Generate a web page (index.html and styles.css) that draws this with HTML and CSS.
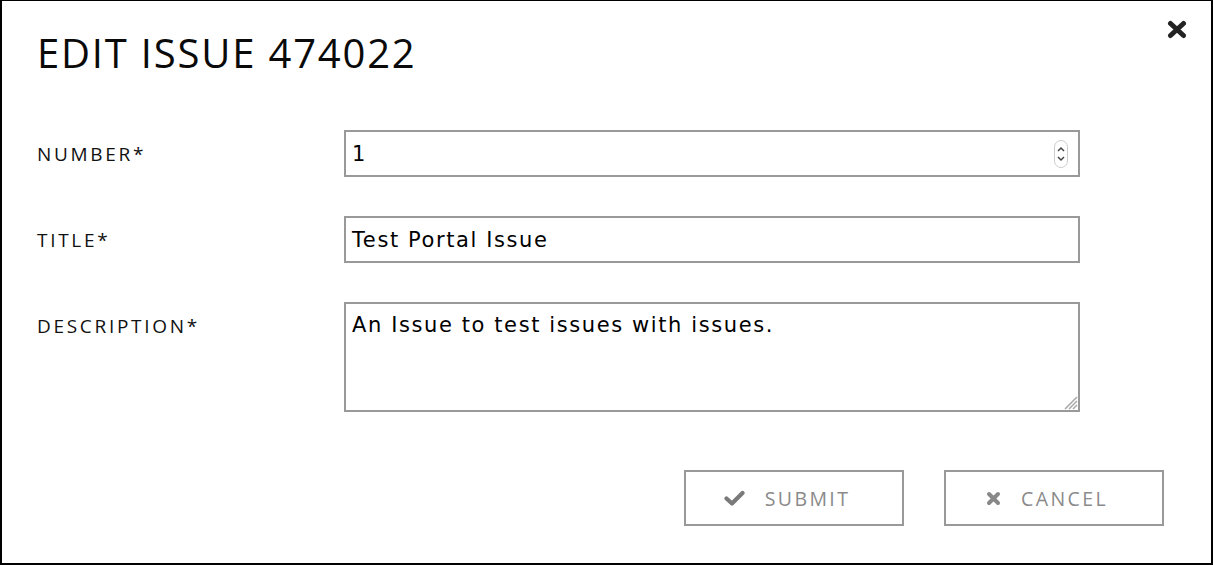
FILE: index.html
```html
<!DOCTYPE html>
<html>
<head>
<meta charset="utf-8">
<link rel="stylesheet" href="styles.css">
</head>
<body>
<div class="modal">
  <button class="close" aria-label="Close">
    <svg width="20" height="19" viewBox="0 0 20 19"><path d="M3.5 3.5 L16.5 15.5 M16.5 3.5 L3.5 15.5" stroke="#222" stroke-width="5" stroke-linecap="round"/></svg>
  </button>
  <h1 class="title">EDIT ISSUE 474022</h1>
  <form class="form">
    <label class="label">NUMBER*</label>
    <div class="field number-field">
      <span class="value">1</span>
      <span class="spinner">
        <svg width="14" height="28" viewBox="0 0 14 28"><rect x="0.5" y="0.5" width="13" height="27" rx="6.5" fill="#fff" stroke="#ccc"/><path d="M4 11 L7 8 L10 11" fill="none" stroke="#444" stroke-width="1.5"/><path d="M4 17 L7 20 L10 17" fill="none" stroke="#444" stroke-width="1.5"/></svg>
      </span>
    </div>
    <label class="label">TITLE*</label>
    <div class="field"><span class="value">Test Portal Issue</span></div>
    <label class="label">DESCRIPTION*</label>
    <div class="field textarea">
      <span class="value">An Issue to test issues with issues.</span>
      <svg class="grip" width="18" height="18" viewBox="0 0 18 18"><path d="M17 5 L5 17 M17 9 L9 17 M17 13 L13 17" stroke="#aaa" stroke-width="1.6"/></svg>
    </div>
  </form>
  <div class="actions">
    <button class="btn" type="button">
      <svg class="icon" width="21" height="16" viewBox="0 0 21 16"><path d="M2.5 8.5 L8 13.5 L18.5 3" fill="none" stroke="#7a7a7a" stroke-width="4.2" stroke-linejoin="round" stroke-linecap="round"/></svg>
      <span>SUBMIT</span>
    </button>
    <button class="btn" type="button">
      <svg class="icon" width="15" height="15" viewBox="0 0 15 15"><path d="M3 3 L12 12 M12 3 L3 12" stroke="#888" stroke-width="4" stroke-linecap="round"/></svg>
      <span>CANCEL</span>
    </button>
  </div>
</div>
</body>
</html>
```

FILE: styles.css
```css
html, body {
  margin: 0;
  padding: 0;
  background: #fff;
}
.modal {
  position: relative;
  box-sizing: border-box;
  width: 1213px;
  height: 565px;
  border-top: 1px solid #000;
  border-left: 2px solid #000;
  border-right: 2px solid #000;
  border-bottom: 2px solid #000;
  padding: 0 0 0 35px;
  font-family: "Open Sans", "Noto Sans", sans-serif;
  color: #000;
}
.close {
  position: absolute;
  top: 19px;
  right: 24px;
  border: 0;
  background: none;
  padding: 0;
  width: 20px;
  height: 19px;
  cursor: pointer;
}
.title {
  margin: 0;
  padding-top: 26px;
  height: 103px;
  box-sizing: border-box;
  font-size: 40px;
  line-height: 52px;
  font-weight: 400;
  letter-spacing: 1.8px;
  color: #0a0a0a;
}
.form {
  display: grid;
  grid-template-columns: 307px 736px;
  grid-auto-rows: auto;
  row-gap: 39px;
  margin-top: 26px;
}
.label {
  display: block;
  height: 47px;
  font-size: 19px;
  line-height: 49px;
  letter-spacing: 2.7px;
  color: #111;
}
.field {
  box-sizing: border-box;
  height: 47px;
  border: 2px solid #999;
  display: flex;
  align-items: center;
  padding: 0 6px;
  font-family: "DejaVu Sans", sans-serif;
  font-size: 21px;
  letter-spacing: 1.6px;
  position: relative;
  color: #000;
}
.number-field {
  justify-content: space-between;
}
.spinner {
  display: flex;
  margin-right: 4px;
}
.textarea {
  height: 110px;
  align-items: flex-start;
  padding-top: 9px;
}
.grip {
  position: absolute;
  right: 0;
  bottom: 0;
}
.actions {
  display: flex;
  justify-content: flex-end;
  gap: 40px;
  margin-top: 58px;
  padding-right: 47px;
}
.btn {
  box-sizing: border-box;
  width: 220px;
  height: 56px;
  border: 2px solid #999;
  background: #fff;
  display: flex;
  align-items: center;
  justify-content: center;
  gap: 20px;
  font-family: "Open Sans", "Noto Sans", sans-serif;
  font-size: 19.5px;
  letter-spacing: 2.4px;
  color: #8a8a8a;
  padding: 0 14px 0 0;
}
.icon {
  display: block;
}
```
